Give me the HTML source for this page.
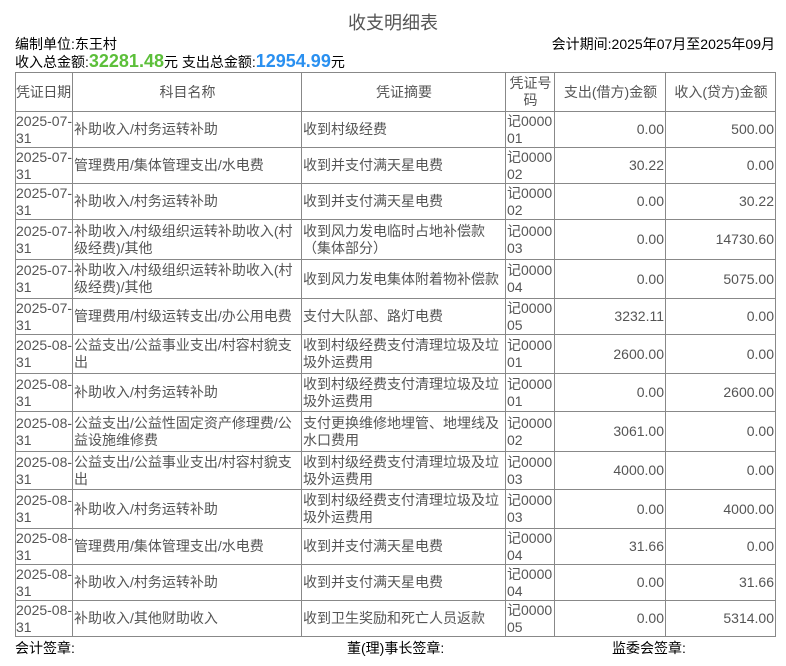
<!DOCTYPE html>
<html><head><meta charset="utf-8"><style>
body{margin:0;width:786px;height:666px;background:#fff;font-family:"Liberation Sans","Noto Sans CJK SC",sans-serif;font-size:14px;color:#000;position:relative;overflow:hidden}
.a{position:absolute;white-space:nowrap}
table{position:absolute;left:15px;top:72px;border-collapse:collapse;table-layout:fixed;width:761px;color:#555}
td,th{border:1px solid #888;padding:0 0 0 1px;font-size:14px;line-height:17px;font-weight:normal;overflow:hidden;vertical-align:middle;word-break:break-all}
td.d{white-space:nowrap;padding:0}
th{text-align:center;color:#555}
td.r{text-align:right;padding-right:1px}
</style></head><body>
<div class="a" style="left:0;width:786px;text-align:center;top:9px;font-size:18px;color:#555">收支明细表</div>
<div class="a" style="left:15px;top:34px">编制单位:东王村</div>
<div class="a" style="right:11px;top:34px">会计期间:2025年07月至2025年09月</div>
<div class="a" style="left:15px;top:51px">收入总金额:<b style="color:#5cbf3a;font-size:18px">32281.48</b>元 支出总金额:<b style="color:#2a90f0;font-size:18px">12954.99</b>元</div>
<table>
<colgroup><col style="width:57px"><col style="width:229px"><col style="width:204px"><col style="width:49px"><col style="width:111px"><col style="width:110px"></colgroup>
<tr style="height:39px"><th style="text-align:left;white-space:nowrap;padding:0;letter-spacing:-0.3px">凭证日期</th><th>科目名称</th><th>凭证摘要</th><th>凭证号码</th><th>支出(借方)金额</th><th>收入(贷方)金额</th></tr>
<tr style="height:36px"><td class="d">2025-07-<br>31</td><td>补助收入/村务运转补助</td><td>收到村级经费</td><td>记000001</td><td class="r">0.00</td><td class="r">500.00</td></tr>
<tr style="height:36px"><td class="d">2025-07-<br>31</td><td>管理费用/集体管理支出/水电费</td><td>收到并支付满天星电费</td><td>记000002</td><td class="r">30.22</td><td class="r">0.00</td></tr>
<tr style="height:36px"><td class="d">2025-07-<br>31</td><td>补助收入/村务运转补助</td><td>收到并支付满天星电费</td><td>记000002</td><td class="r">0.00</td><td class="r">30.22</td></tr>
<tr style="height:40px"><td class="d">2025-07-<br>31</td><td>补助收入/村级组织运转补助收入(村级经费)/其他</td><td>收到风力发电临时占地补偿款（集体部分）</td><td>记000003</td><td class="r">0.00</td><td class="r">14730.60</td></tr>
<tr style="height:39px"><td class="d">2025-07-<br>31</td><td>补助收入/村级组织运转补助收入(村级经费)/其他</td><td>收到风力发电集体附着物补偿款</td><td>记000004</td><td class="r">0.00</td><td class="r">5075.00</td></tr>
<tr style="height:36px"><td class="d">2025-07-<br>31</td><td>管理费用/村级运转支出/办公用电费</td><td>支付大队部、路灯电费</td><td>记000005</td><td class="r">3232.11</td><td class="r">0.00</td></tr>
<tr style="height:39px"><td class="d">2025-08-<br>31</td><td>公益支出/公益事业支出/村容村貌支出</td><td>收到村级经费支付清理垃圾及垃圾外运费用</td><td>记000001</td><td class="r">2600.00</td><td class="r">0.00</td></tr>
<tr style="height:38px"><td class="d">2025-08-<br>31</td><td>补助收入/村务运转补助</td><td>收到村级经费支付清理垃圾及垃圾外运费用</td><td>记000001</td><td class="r">0.00</td><td class="r">2600.00</td></tr>
<tr style="height:40px"><td class="d">2025-08-<br>31</td><td>公益支出/公益性固定资产修理费/公益设施维修费</td><td>支付更换维修地埋管、地埋线及水口费用</td><td>记000002</td><td class="r">3061.00</td><td class="r">0.00</td></tr>
<tr style="height:38px"><td class="d">2025-08-<br>31</td><td>公益支出/公益事业支出/村容村貌支出</td><td>收到村级经费支付清理垃圾及垃圾外运费用</td><td>记000003</td><td class="r">4000.00</td><td class="r">0.00</td></tr>
<tr style="height:39px"><td class="d">2025-08-<br>31</td><td>补助收入/村务运转补助</td><td>收到村级经费支付清理垃圾及垃圾外运费用</td><td>记000003</td><td class="r">0.00</td><td class="r">4000.00</td></tr>
<tr style="height:36px"><td class="d">2025-08-<br>31</td><td>管理费用/集体管理支出/水电费</td><td>收到并支付满天星电费</td><td>记000004</td><td class="r">31.66</td><td class="r">0.00</td></tr>
<tr style="height:36px"><td class="d">2025-08-<br>31</td><td>补助收入/村务运转补助</td><td>收到并支付满天星电费</td><td>记000004</td><td class="r">0.00</td><td class="r">31.66</td></tr>
<tr style="height:36px"><td class="d">2025-08-<br>31</td><td>补助收入/其他财助收入</td><td>收到卫生奖励和死亡人员返款</td><td>记000005</td><td class="r">0.00</td><td class="r">5314.00</td></tr>
</table>
<div class="a" style="left:15px;top:638px">会计签章:</div>
<div class="a" style="left:347px;top:638px">董(理)事长签章:</div>
<div class="a" style="left:612px;top:638px">监委会签章:</div>
</body></html>
